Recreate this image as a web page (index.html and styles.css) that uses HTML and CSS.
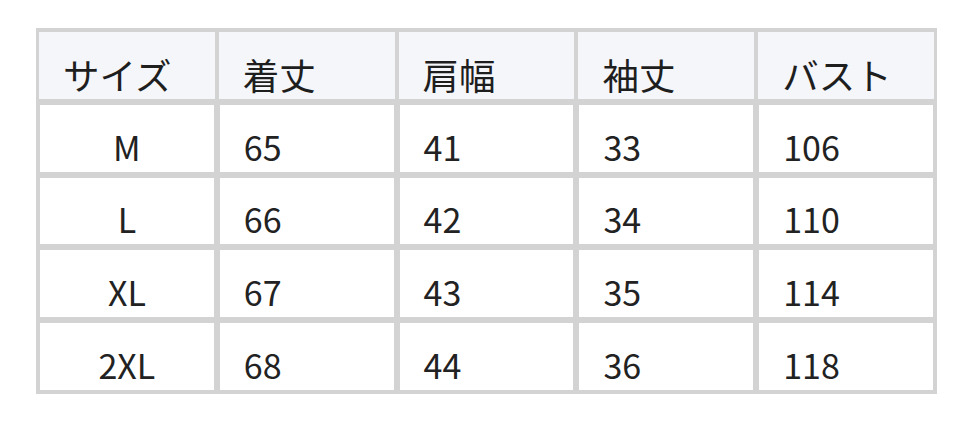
FILE: index.html
```html
<!DOCTYPE html>
<html lang="ja">
<head>
<meta charset="utf-8">
<title>サイズ表</title>
<link rel="stylesheet" href="styles.css">
</head>
<body>
<div class="wrap">
<table class="size-table">
  <thead>
    <tr>
      <th>サイズ</th>
      <th>着丈</th>
      <th>肩幅</th>
      <th>袖丈</th>
      <th>バスト</th>
    </tr>
  </thead>
  <tbody>
    <tr><td class="size">M</td><td>65</td><td>41</td><td>33</td><td>106</td></tr>
    <tr><td class="size">L</td><td>66</td><td>42</td><td>34</td><td>110</td></tr>
    <tr><td class="size">XL</td><td>67</td><td>43</td><td>35</td><td>114</td></tr>
    <tr><td class="size">2XL</td><td>68</td><td>44</td><td>36</td><td>118</td></tr>
  </tbody>
</table>
</div>
</body>
</html>
```
FILE: styles.css
```css
html, body {
  margin: 0;
  padding: 0;
  background: #ffffff;
}

.wrap {
  padding: 28px 0 0 36px;
}

.size-table {
  width: 901px;
  table-layout: fixed;
  border-collapse: separate;
  border-spacing: 0;
  border: 1px solid #d3d3d3;
  font-family: "Noto Sans CJK JP", "Noto Sans", sans-serif;
  font-size: 34px;
  line-height: 46px;
  color: #222222;
}

.size-table tr {
  height: 72.8px;
}

.size-table th,
.size-table td {
  border: 3px solid #d3d3d3;
  padding: 0 0 2px 24px;
  vertical-align: bottom;
  text-align: left;
  font-weight: 400;
}

.size-table th {
  background: #f5f6fa;
  border-left-width: 2px;
  border-right-width: 2px;
  padding-bottom: 0;
  font-size: 36.5px;
  line-height: 48px;
  color: #1e1e1e;
}

.size-table td.size {
  text-align: center;
  padding-left: 0;
}
```
